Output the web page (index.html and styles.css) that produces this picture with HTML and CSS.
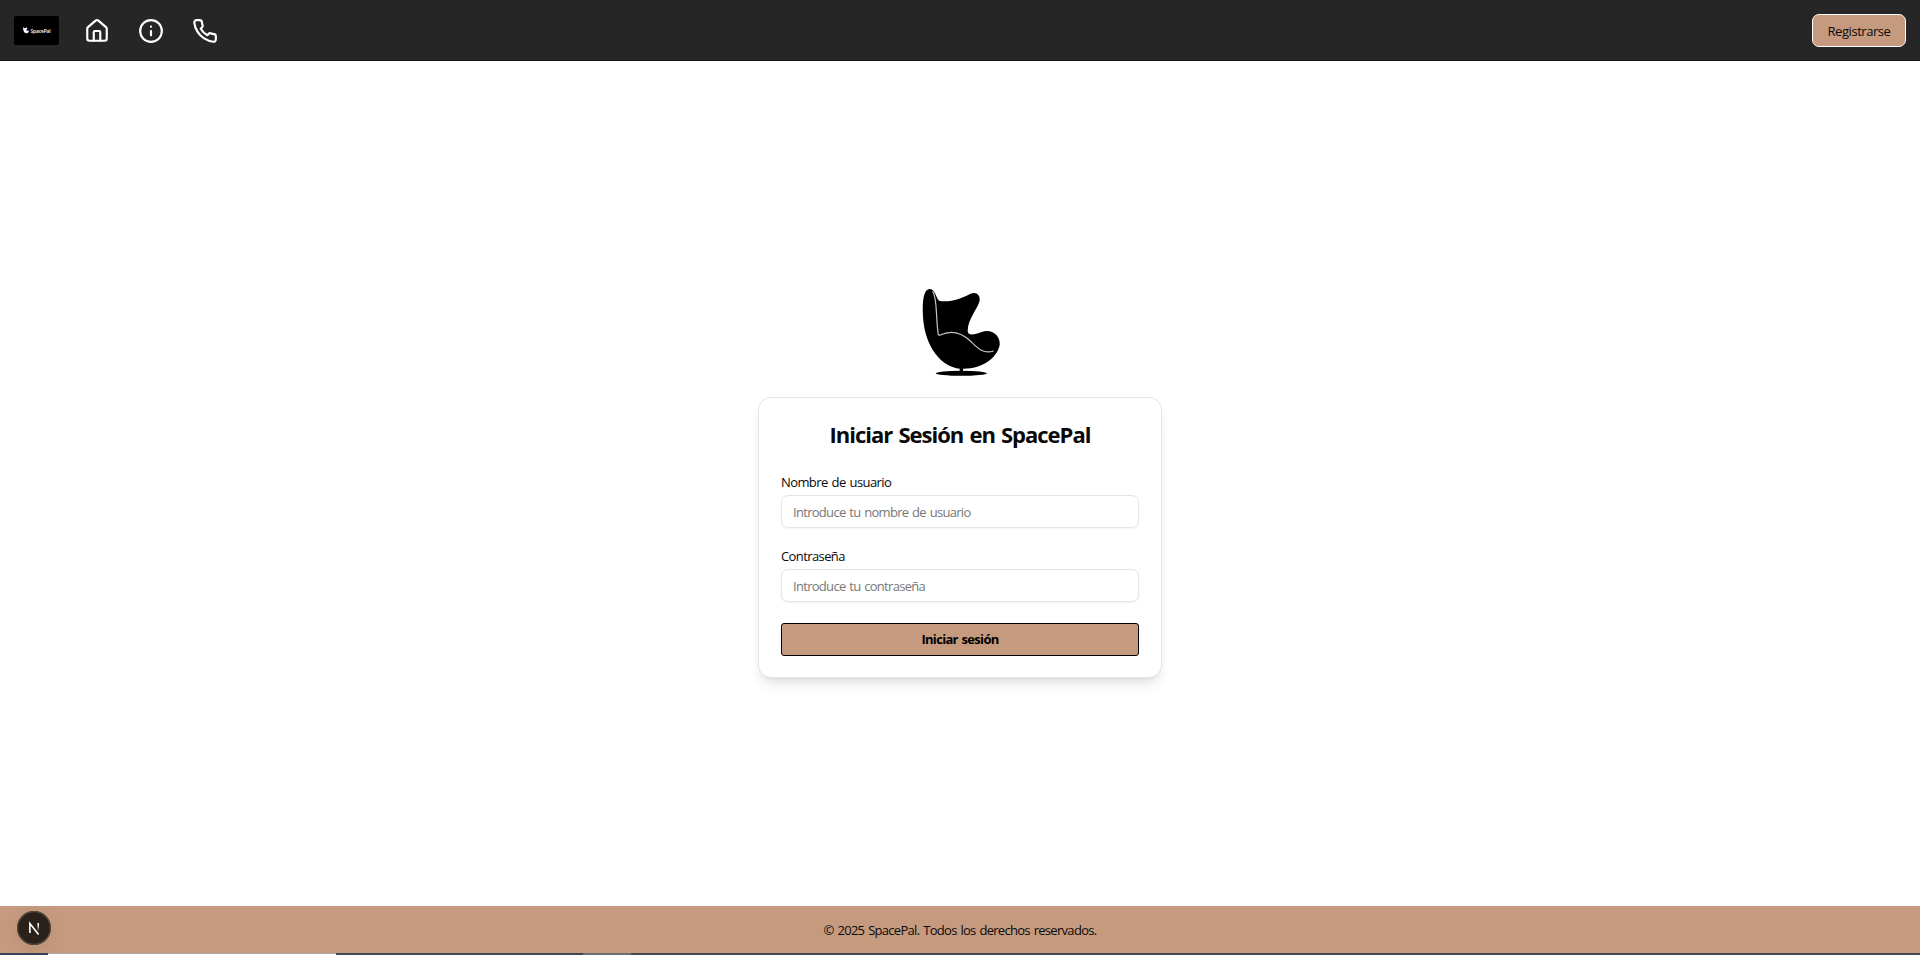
FILE: index.html
```html
<!DOCTYPE html>
<html lang="es">
<head>
<meta charset="utf-8">
<title>SpacePal</title>
<link rel="stylesheet" href="styles.css">
</head>
<body>
<header class="navbar">
  <nav class="nav-links">
    <a class="brand" href="#">
      <svg class="brand-chair" viewBox="65 50 240 275"><path d="M70 110C69 70 78 56 92 57C108 58 110 88 120 93C150 98 190 85 210 72C228 63 241 74 238 92C230 120 205 145 204 185C206 200 225 193 245 186C278 175 300 200 298 225C290 270 240 300 184 296C120 290 72 220 70 110Z"/></svg>
      <span class="brand-name">SpacePal</span>
    </a>
    <a href="#" aria-label="Inicio"><svg class="icon" viewBox="0 0 24 24"><path d="M15 21v-8a1 1 0 0 0-1-1h-4a1 1 0 0 0-1 1v8"/><path d="M3 10a2 2 0 0 1 .709-1.528l7-5.999a2 2 0 0 1 2.582 0l7 5.999A2 2 0 0 1 21 10v9a2 2 0 0 1-2 2H5a2 2 0 0 1-2-2z"/></svg></a>
    <a href="#" aria-label="Información"><svg class="icon" viewBox="0 0 24 24"><circle cx="12" cy="12" r="10"/><path d="M12 16v-4M12 8h.01"/></svg></a>
    <a href="#" aria-label="Contacto"><svg class="icon" viewBox="0 0 24 24"><path d="M22 16.92v3a2 2 0 0 1-2.18 2 19.79 19.79 0 0 1-8.63-3.07 19.5 19.5 0 0 1-6-6 19.79 19.79 0 0 1-3.07-8.67A2 2 0 0 1 4.11 2h3a2 2 0 0 1 2 1.72 12.84 12.84 0 0 0 .7 2.81 2 2 0 0 1-.45 2.11L8.09 9.91a16 16 0 0 0 6 6l1.27-1.27a2 2 0 0 1 2.11-.45 12.84 12.84 0 0 0 2.81.7A2 2 0 0 1 22 16.92z"/></svg></a>
  </nav>
  <button class="register">Registrarse</button>
</header>
<main class="content">
  <svg class="chair" viewBox="0 0 360 360">
    <path d="M69 140C66 85 73 56 90 57C107 58 108 88 119 93C150 98 190 84 210 72C228 63 241 74 239 92C231 120 204 145 203 183C205 200 225 193 245 186C278 175 302 200 299 225C291 267 240 299 184 296C125 294 74 230 69 140Z"/>
    <path d="M179 290h10v18h-10z"/>
    <ellipse cx="184" cy="310" rx="77" ry="7.5"/>
    <path class="seam" d="M98 63C112 85 107 135 114 187Q114 198 121 195C155 179 183 187 211 213C236 237 250 253 281 243"/>
  </svg>
  <form class="card">
    <h1 class="title">Iniciar Sesión en SpacePal</h1>
    <div class="field">
      <label class="label" for="user">Nombre de usuario</label>
      <input class="input" id="user" type="text" placeholder="Introduce tu nombre de usuario">
    </div>
    <div class="field">
      <label class="label" for="pass">Contraseña</label>
      <input class="input" id="pass" type="password" placeholder="Introduce tu contraseña">
    </div>
    <button class="submit" type="button">Iniciar sesión</button>
  </form>
</main>
<footer class="footer">
  <span>© 2025 SpacePal. Todos los derechos reservados.</span>
  <div class="dev-badge">
    <svg class="dev-icon" viewBox="0 0 34 34">
      <defs><linearGradient id="fade" x1="0" y1="0" x2="0" y2="1"><stop offset="0.3" stop-color="#fff"/><stop offset="1" stop-color="#fff" stop-opacity="0"/></linearGradient></defs>
      <path d="M12.9 22V12.6L21.6 23.6" fill="none" stroke="#fff" stroke-width="1.6"/>
      <rect x="20.5" y="12" width="1.5" height="8" fill="url(#fade)"/>
    </svg>
  </div>
</footer>
<div class="edge"><div class="edge-left"></div><div class="edge-light"></div><div class="edge-dark"></div><div class="edge-mid"></div></div>
</body>
</html>
```
FILE: styles.css
```css
* { box-sizing: border-box; }
body {
  margin: 0;
  height: 955px;
  display: flex;
  flex-direction: column;
  overflow: hidden;
  background: #fff;
  color: #0a0a0a;
  font-family: "Open Sans", "Noto Sans", sans-serif;
  font-size: 13px;
}
.navbar {
  height: 61px;
  flex: none;
  display: flex;
  align-items: center;
  justify-content: space-between;
  padding: 1px 14px 0;
  background: #262626;
  border-bottom: 1px solid #171717;
}
.nav-links { display: flex; align-items: center; gap: 28px; }
.nav-links a { display: flex; }
.nav-links .brand {
  width: 45px;
  height: 29px;
  margin-right: -2.6px;
  align-items: center;
  justify-content: center;
  gap: 2px;
  border-radius: 2px;
  background: #000;
  color: #fff;
  text-decoration: none;
}
.brand-chair { width: 6px; height: 7px; fill: #fff; }
.brand-name { font-size: 5px; line-height: 6px; font-weight: 600; width: 20px; white-space: nowrap; letter-spacing: -0.2px; }
.icon {
  width: 26px;
  height: 26px;
  fill: none;
  stroke: #fff;
  stroke-width: 2;
  stroke-linecap: round;
  stroke-linejoin: round;
}
.register {
  width: 94px;
  height: 33px;
  padding: 1px 0 0;
  border: 1px solid #fff;
  border-radius: 7px;
  background: #c69a7e;
  color: #0a0a0a;
  font: 400 13px "Open Sans", sans-serif;
  letter-spacing: -0.45px;
}
.content { flex: 1; display: flex; flex-direction: column; align-items: center; padding-top: 209px; }
.chair { width: 120px; height: 120px; flex: none; }
.seam { fill: none; stroke: #c4c4c4; stroke-width: 3.6; }
.card {
  width: 404px;
  height: 281px;
  margin-top: 7px;
  padding: 20px 22px;
  display: flex;
  flex-direction: column;
  border: 1px solid #e5e5e5;
  border-radius: 13px;
  background: #fff;
  box-shadow: 0 9px 13px -3px rgba(0,0,0,.1), 0 4px 6px -4px rgba(0,0,0,.1);
}
.title {
  margin: 0 0 22px;
  font-size: 22px;
  line-height: 32px;
  font-weight: 700;
  letter-spacing: -1px;
  word-spacing: 1.4px;
  text-align: center;
  white-space: nowrap;
}
.field { display: flex; flex-direction: column; margin-bottom: 18px; }
.label { height: 23px; line-height: 20px; font-size: 13px; font-weight: 500; letter-spacing: -0.6px; word-spacing: 1.2px; }
.input {
  height: 33px;
  padding: 1px 11px 0;
  border: 1px solid #e5e5e5;
  border-radius: 7px;
  background: #fff;
  font: 400 13px "Open Sans", sans-serif;
  letter-spacing: -0.7px;
  word-spacing: 1.05px;
  box-shadow: 0 1px 2px rgba(0,0,0,.05);
}
.input::placeholder { color: #777; }
.submit {
  height: 33px;
  flex: none;
  margin-top: 3px;
  padding: 0 0 2px;
  border: 1px solid #000;
  border-radius: 3px;
  background: #c69a7e;
  color: #000;
  font: 700 13px "Open Sans", sans-serif;
  letter-spacing: -0.68px;
  word-spacing: 1px;
}
.footer {
  position: relative;
  height: 47px;
  flex: none;
  display: flex;
  align-items: center;
  justify-content: center;
  background: #c69a7e;
  font-size: 13px;
  letter-spacing: -0.7px;
  word-spacing: 1.1px;
}
.dev-badge {
  position: absolute;
  left: 17px;
  top: 5px;
  width: 34px;
  height: 34px;
  border-radius: 50%;
  background: #2a211b;
  box-shadow: inset 0 0 0 1.3px #554a42, 0 6px 20px rgba(0,0,0,.07);
}
.dev-icon { display: block; width: 34px; height: 34px; }
.edge { height: 2px; flex: none; display: flex; background: #454b4e; }
.edge-left { width: 48px; background: #39435a; }
.edge-light { width: 288px; background: #fff; border-top: 1px solid #aaa; }
.edge-dark { width: 247px; background: #3f4757; }
.edge-mid { width: 48px; background: #6b6f72; }
```
